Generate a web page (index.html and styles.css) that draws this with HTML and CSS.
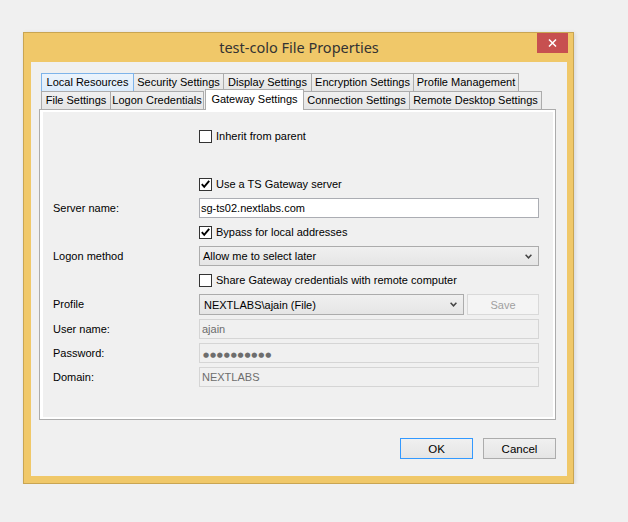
FILE: index.html
```html
<!DOCTYPE html>
<html lang="en">
<head>
<meta charset="utf-8">
<title>test-colo File Properties</title>
<link rel="stylesheet" href="styles.css">
</head>
<body>
<div class="window">
  <div class="titlebar">
    <span class="title">test-colo File Properties</span>
    <button class="close" aria-label="Close"><svg width="9" height="8" viewBox="0 0 9 8"><path d="M1 0.5L8 7.5M8 0.5L1 7.5" stroke="#fff" stroke-width="1.5"/></svg></button>
  </div>
  <div class="client">
    <div class="tabs">
      <div class="tabrow row1">
        <div class="tab hover">Local Resources</div>
        <div class="tab">Security Settings</div>
        <div class="tab">Display Settings</div>
        <div class="tab">Encryption Settings</div>
        <div class="tab">Profile Management</div>
      </div>
      <div class="tabrow row2">
        <div class="tab">File Settings</div>
        <div class="tab">Logon Credentials</div>
        <div class="tab selected">Gateway Settings</div>
        <div class="tab">Connection Settings</div>
        <div class="tab">Remote Desktop Settings</div>
      </div>
    </div>
    <div class="panel">
      <div class="page">
        <div class="row">
          <span class="label"></span>
          <label class="check"><span class="cb"></span>Inherit from parent</label>
        </div>
        <div class="row section">
          <span class="label"></span>
          <label class="check"><span class="cb"><svg width="11" height="11" viewBox="0 0 11 11"><path d="M1.8 5.2L4.2 7.8L9.2 1.8" fill="none" stroke="#000" stroke-width="1.9"/></svg></span>Use a TS Gateway server</label>
        </div>
        <div class="row">
          <span class="label">Server name:</span>
          <span class="input">sg-ts02.nextlabs.com</span>
        </div>
        <div class="row">
          <span class="label"></span>
          <label class="check"><span class="cb"><svg width="11" height="11" viewBox="0 0 11 11"><path d="M1.8 5.2L4.2 7.8L9.2 1.8" fill="none" stroke="#000" stroke-width="1.9"/></svg></span>Bypass for local addresses</label>
        </div>
        <div class="row">
          <span class="label">Logon method</span>
          <span class="combo"><span class="combo-text">Allow me to select later</span><svg class="arrow" width="7" height="5" viewBox="0 0 7 5"><path d="M0.6 0.8L3.5 3.8L6.4 0.8" fill="none" stroke="#444" stroke-width="1.5"/></svg></span>
        </div>
        <div class="row">
          <span class="label"></span>
          <label class="check"><span class="cb"></span>Share Gateway credentials with remote computer</label>
        </div>
        <div class="row tall">
          <span class="label">Profile</span>
          <span class="profile">
            <span class="combo narrow"><span class="combo-text">NEXTLABS\ajain (File)</span><svg class="arrow" width="7" height="5" viewBox="0 0 7 5"><path d="M0.6 0.8L3.5 3.8L6.4 0.8" fill="none" stroke="#444" stroke-width="1.5"/></svg></span>
            <button class="save" disabled>Save</button>
          </span>
        </div>
        <div class="row">
          <span class="label">User name:</span>
          <span class="input disabled">ajain</span>
        </div>
        <div class="row">
          <span class="label">Password:</span>
          <span class="input disabled"><span class="dots">●●●●●●●●●●</span></span>
        </div>
        <div class="row">
          <span class="label">Domain:</span>
          <span class="input disabled">NEXTLABS</span>
        </div>
      </div>
    </div>
    <div class="buttons">
      <button class="btn default">OK</button>
      <button class="btn">Cancel</button>
    </div>
  </div>
</div>
</body>
</html>
```

FILE: styles.css
```css
html, body {
  margin: 0;
  padding: 0;
  background: #f0f0f0;
}

body {
  padding: 32px 0 0 23px;
  font-family: "Liberation Sans", Arial, sans-serif;
  font-size: 11px;
  color: #000;
}

.window {
  box-sizing: border-box;
  width: 551px;
  height: 452px;
  border: 1px solid #c9a552;
  background: #f0c869;
  padding: 0 6px 7px 7px;
  display: flex;
  flex-direction: column;
  box-shadow: 1px 1px 4px rgba(0, 0, 0, 0.12);
}

.titlebar {
  height: 29px;
  display: grid;
  grid-template-columns: 1fr auto 1fr;
  flex: none;
}

.title {
  grid-column: 2;
  align-self: center;
  font-family: "Noto Sans", "Open Sans", sans-serif;
  font-size: 14.5px;
  color: #333;
  line-height: 20px;
  margin-top: -1px;
}

.close {
  grid-column: 3;
  justify-self: end;
  align-self: start;
  width: 31px;
  height: 20px;
  margin: 0 -1px 0 0;
  padding: 0;
  border: none;
  background: #c75050;
  display: flex;
  align-items: center;
  justify-content: center;
}

.client {
  flex: 1;
  background: #f0f0f0;
  padding: 11px 11px 0 8px;
  display: flex;
  flex-direction: column;
}

.tabs {
  margin-left: 2px;
}

.tabrow {
  display: flex;
  height: 18px;
}

.tab {
  box-sizing: border-box;
  flex: none;
  height: 18px;
  border: 1px solid #acacac;
  border-bottom: none;
  background: linear-gradient(#f0f0f0, #e5e5e5);
  text-align: center;
  line-height: 17px;
  white-space: nowrap;
}

.tab + .tab {
  margin-left: -1px;
}

.tab.hover {
  position: relative;
  z-index: 1;
  border-color: #7eb4ea;
  background: linear-gradient(#ecf4fc, #dcecfc);
}

.row1 .tab:nth-child(1) { width: 93px; }
.row1 .tab:nth-child(2) { width: 91px; }
.row1 .tab:nth-child(3) { width: 89px; }
.row1 .tab:nth-child(4) { width: 103px; }
.row1 .tab:nth-child(5) { width: 106px; }

.row2 .tab:nth-child(1) { width: 70px; }
.row2 .tab:nth-child(2) { width: 94px; }
.row2 .tab:nth-child(3) { width: 99px; }
.row2 .tab:nth-child(4) { width: 107px; }
.row2 .tab:nth-child(5) { width: 133px; }

.tab.selected {
  position: relative;
  z-index: 2;
  height: 21px;
  margin-top: -2px;
  background: #fff;
  line-height: 18px;
}

.tab + .tab.selected {
  margin-left: 1px;
}

.panel {
  box-sizing: border-box;
  height: 311px;
  border: 1px solid #acacac;
  background: #fff;
  padding: 2px 2px 2px 3px;
}

.page {
  height: 100%;
  box-sizing: border-box;
  background: #f0f0f0;
  padding: 14px 0 0 10px;
  display: flex;
  flex-direction: column;
  gap: 4px;
}

.row {
  display: grid;
  grid-template-columns: 146px 340px;
  height: 20px;
  align-items: center;
}

.row.section {
  margin-top: 24px;
}

.row.tall {
  height: 21px;
}

.label {
  line-height: 13px;
}

.check {
  display: flex;
  align-items: center;
  gap: 4px;
  line-height: 13px;
}

.cb {
  box-sizing: border-box;
  width: 13px;
  height: 13px;
  border: 1px solid #333;
  background: #fff;
  display: flex;
  flex: none;
}

.input {
  box-sizing: border-box;
  height: 20px;
  border: 1px solid #abadb3;
  background: #fff;
  padding-left: 1px;
  line-height: 18px;
  white-space: nowrap;
}

.input.disabled {
  border-color: #d5d5d5;
  background: #f0f0f0;
  color: #6d6d6d;
  padding-left: 2px;
}

.dots {
  font-family: "DejaVu Sans", sans-serif;
  font-size: 7px;
  letter-spacing: 0.8px;
  color: #6d6d6d;
  padding-left: 1px;
}

.combo {
  box-sizing: border-box;
  height: 20px;
  border: 1px solid #acacac;
  background: linear-gradient(#f0f0f0, #e5e5e5);
  display: flex;
  align-items: center;
  padding: 0 6px 0 3px;
}

.combo-text {
  flex: 1;
  line-height: 18px;
  white-space: nowrap;
}

.arrow {
  flex: none;
}

.profile {
  display: flex;
  gap: 3px;
  height: 21px;
}

.combo.narrow {
  width: 265px;
  height: 21px;
  padding-left: 4px;
  padding-right: 6px;
}

.save {
  box-sizing: border-box;
  width: 72px;
  height: 21px;
  margin: 0;
  border: 1px solid #d9d9d9;
  background: #f4f4f4;
  color: #a0a0a0;
  font: inherit;
  font-size: 11px;
  padding: 0;
}

.buttons {
  display: flex;
  justify-content: flex-end;
  gap: 10px;
  margin-top: 18px;
}

.btn {
  box-sizing: border-box;
  width: 73px;
  height: 21px;
  margin: 0;
  padding: 0;
  border: 1px solid #acacac;
  background: linear-gradient(#f0f0f0, #e5e5e5);
  font-family: "Liberation Sans", Arial, sans-serif;
  font-size: 11.5px;
  color: #000;
}

.btn.default {
  border-color: #3399ff;
}
```
